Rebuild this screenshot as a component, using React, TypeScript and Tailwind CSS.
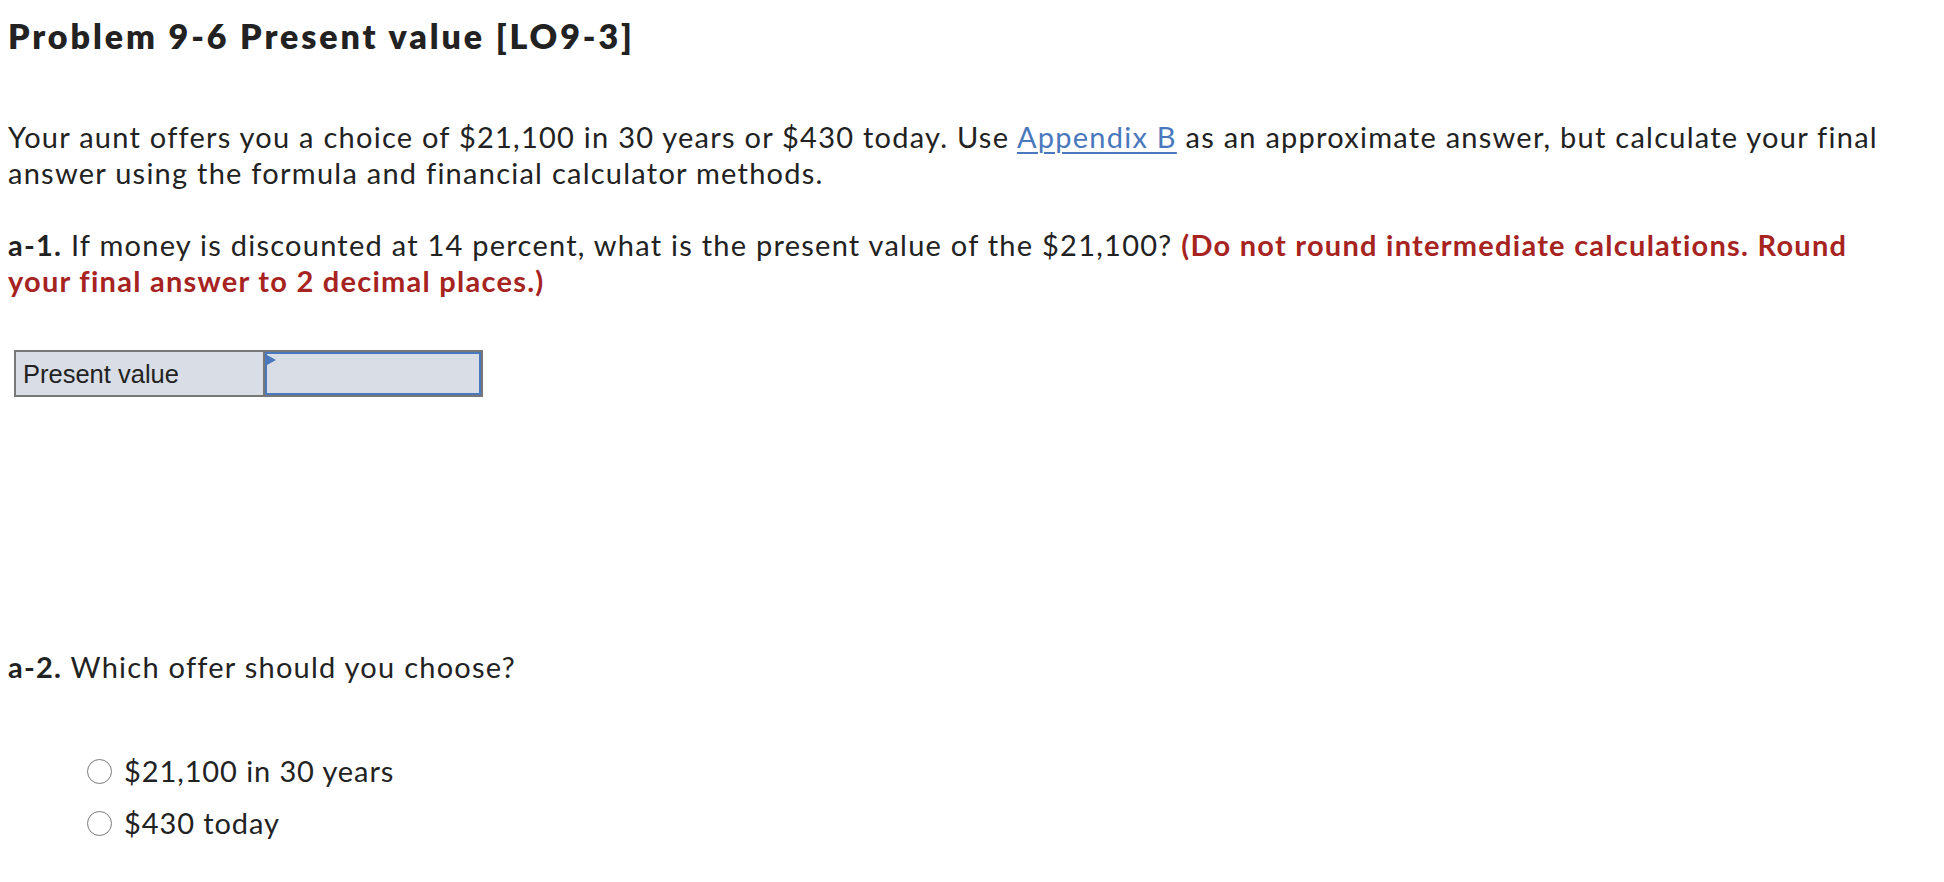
import React from "react";

function Radio({ label }: { label: string }) {
  return (
    <label className="flex items-center gap-[12px] h-[52px]">
      <span className="w-[25px] h-[25px] rounded-full border-[1.5px] border-[#7a7a7a] bg-white" />
      <span>{label}</span>
    </label>
  );
}

export default function App() {
  return (
    <div className="min-h-screen bg-white text-[#222] pl-[8px] pt-[16px] font-['Lato','Liberation_Sans',sans-serif]">
      <h1 className="text-[34px] font-extrabold leading-[40px] tracking-[2.9px]">Problem 9-6 Present value [LO9-3]</h1>

      <p className="mt-[63px] text-[29px] leading-[36px] tracking-[1.25px] whitespace-nowrap">
        Your aunt offers you a choice of $21,100 in 30 years or $430 today. Use{" "}
        <a className="text-[#4a78bd] underline decoration-2 underline-offset-[4px]">Appendix B</a> as an approximate answer, but calculate your final
        <br />
        answer using the formula and financial calculator methods.
      </p>

      <p className="mt-[36px] text-[29px] leading-[36px] tracking-[1.25px] whitespace-nowrap">
        <b>a-1.</b> If money is discounted at 14 percent, what is the present value of the $21,100?{" "}
        <b className="text-[#a6231f]">(Do not round intermediate calculations. Round</b>
        <br />
        <b className="text-[#a6231f]">your final answer to 2 decimal places.)</b>
      </p>

      <div className="mt-[51px] ml-[6px] flex w-[469px] h-[47px] border-2 border-[#777] bg-[#d9dde5] font-['Liberation_Sans',sans-serif]">
        <div className="w-[249px] border-r-2 border-[#777] flex items-center pl-[7px] pt-[2px] text-[25.5px] text-[#222]">Present value</div>
        <div className="relative flex-1 border-2 border-[#4a78bd]">
          <span className="absolute left-0 top-[1px] w-0 h-0 border-y-[5px] border-y-transparent border-l-[9px] border-l-[#4a78bd]" />
        </div>
      </div>

      <p className="mt-[252px] text-[29px] leading-[36px] tracking-[1.25px]">
        <b>a-2.</b> Which offer should you choose?
      </p>

      <div className="mt-[60px] ml-[79px] text-[29px] leading-[36px] tracking-[0.9px]">
        <Radio label="$21,100 in 30 years" />
        <Radio label="$430 today" />
      </div>
    </div>
  );
}
